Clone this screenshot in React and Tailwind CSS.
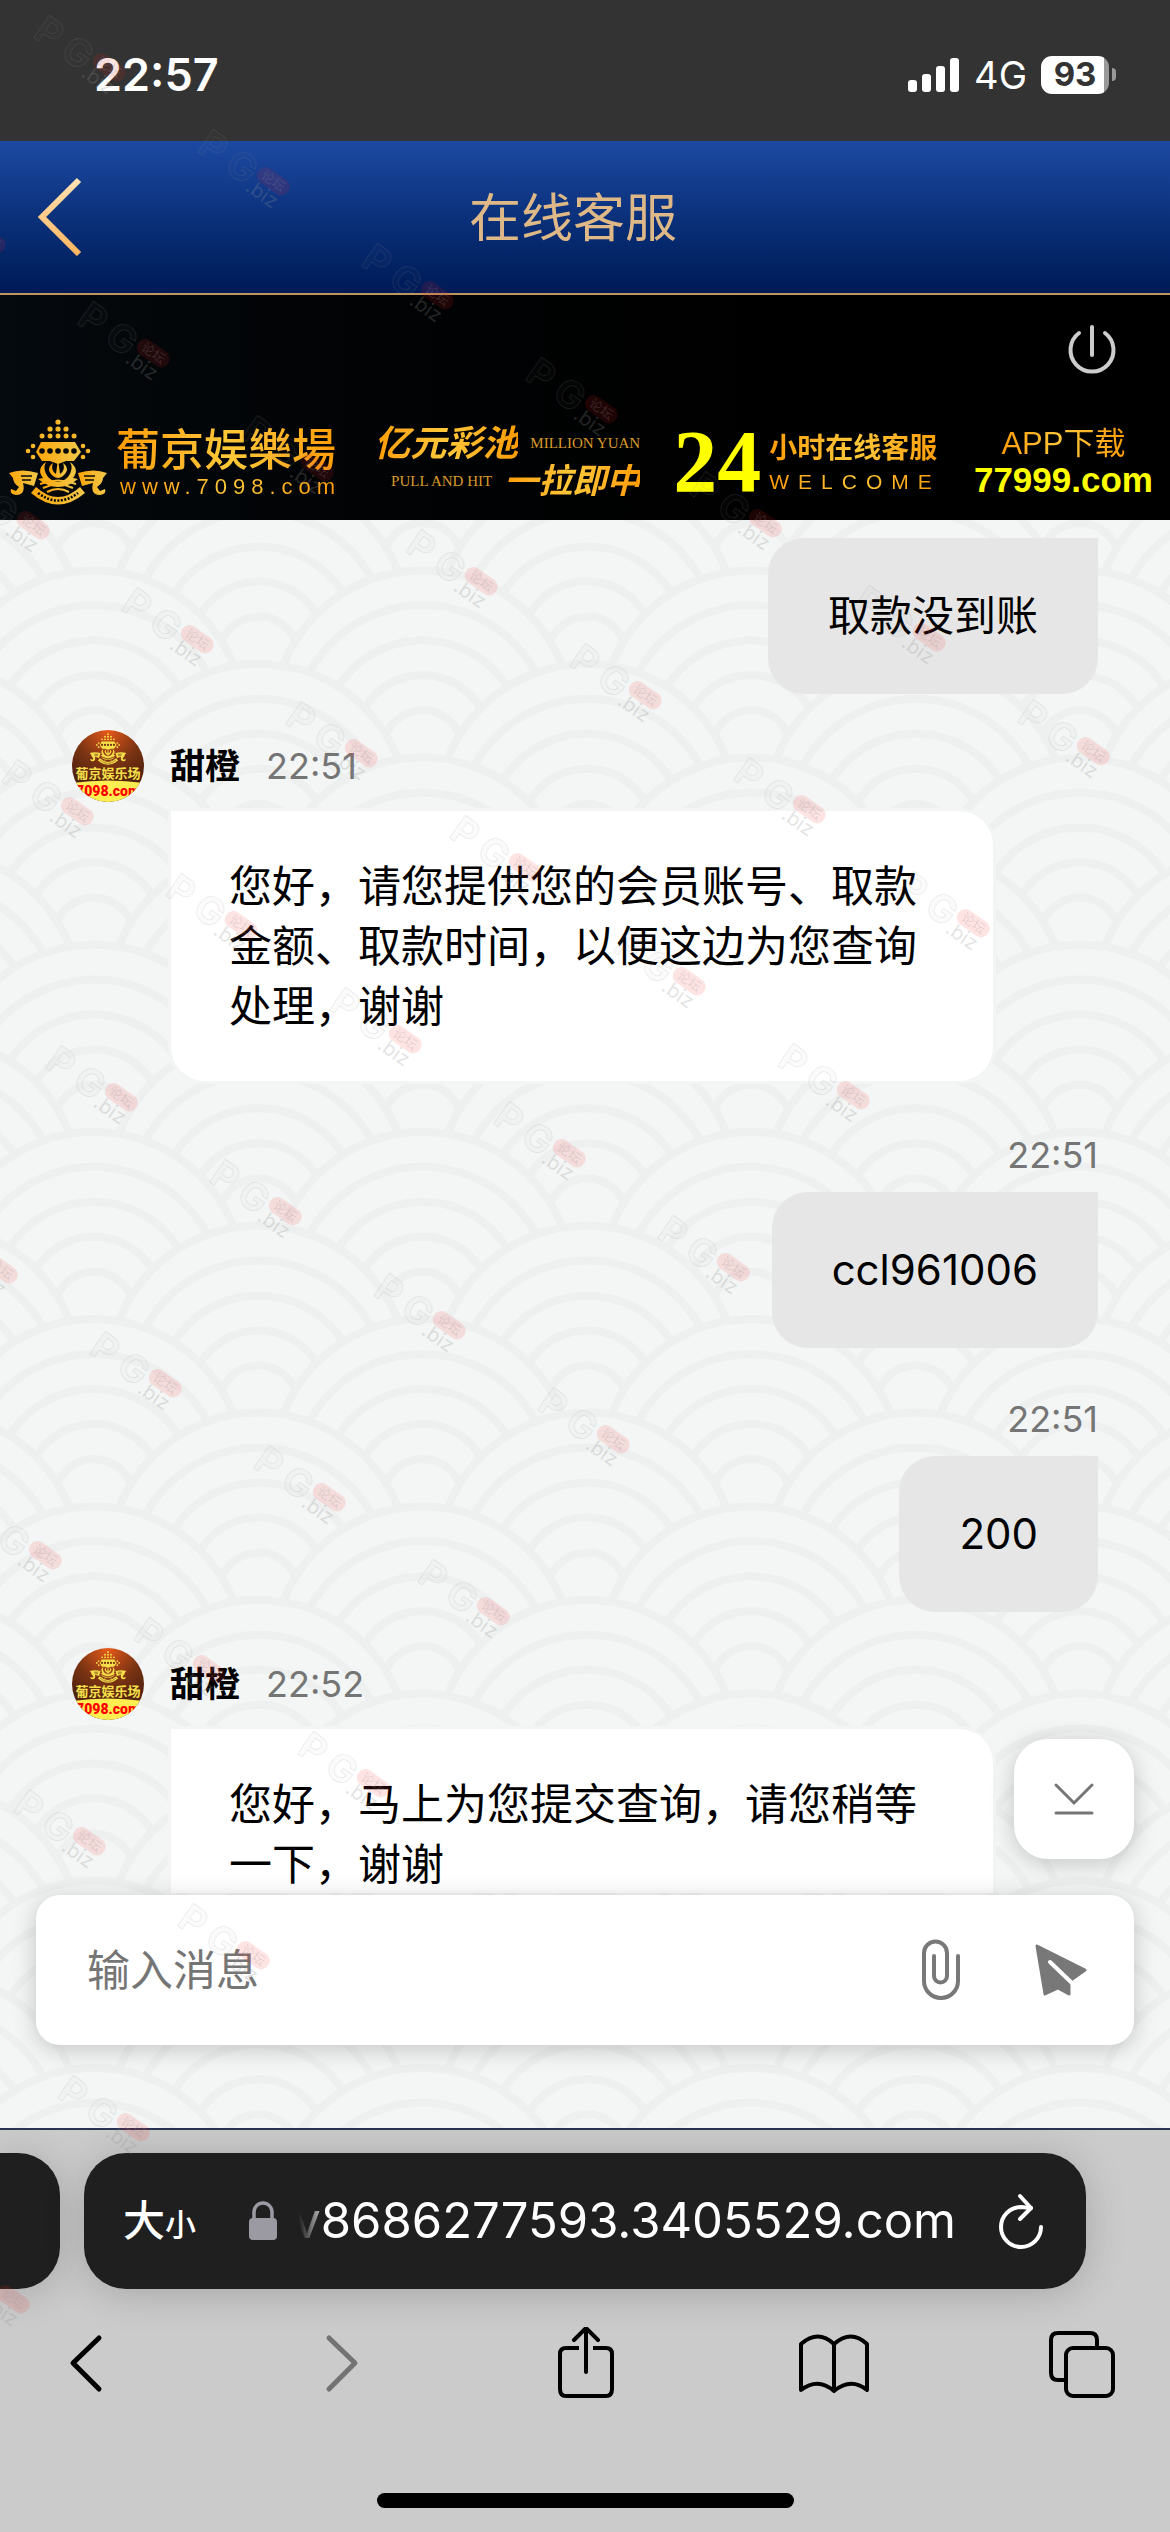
const GOLD_TEXT = "bg-linear-to-r from-[#ff9c00] via-[#ffc838] to-[#ff9c00] bg-clip-text text-transparent"

const messages = [
  { id: 1, from: "me", text: "取款没到账" },
  { id: 2, from: "agent", name: "甜橙", time: "22:51", text: "您好，请您提供您的会员账号、取款金额、取款时间，以便这边为您查询处理，谢谢" },
  { id: 3, from: "me", time: "22:51", text: "ccl961006" },
  { id: 4, from: "me", time: "22:51", text: "200" },
  { id: 5, from: "agent", name: "甜橙", time: "22:52", text: "您好，马上为您提交查询，请您稍等一下，谢谢" },
]

function StatusBar() {
  return (
    <div className="flex h-[141px] shrink-0 items-center justify-between bg-[#333] pl-[94px] pr-[54px] pt-[8px] text-white">
      <span className="text-[45px] font-semibold leading-none">22:57</span>
      <div className="flex items-center gap-[14px]">
        <svg className="h-[34px] w-[52px]" viewBox="0 0 52 34" fill="currentColor">
          <rect x="0" y="22" width="9" height="12" rx="3" />
          <rect x="14" y="16" width="9" height="18" rx="3" />
          <rect x="28" y="8" width="9" height="26" rx="3" />
          <rect x="42" y="0" width="9" height="34" rx="3" />
        </svg>
        <span className="text-[38px] leading-none">4G</span>
        <div className="flex items-center gap-[3px]">
          <span className="flex h-[38px] w-[68px] items-center justify-center rounded-[11px] bg-linear-to-r from-white from-93% to-[#999] to-93% text-[33px] font-bold leading-none text-[#333]">
            93
          </span>
          <span className="h-[13px] w-[4px] rounded-r-full bg-[#999]" />
        </div>
      </div>
    </div>
  )
}

function Header() {
  return (
    <header className="flex h-[154px] shrink-0 items-center border-b-2 border-[#c09560] bg-linear-to-b from-[#1c49a2] to-[#001a56] pl-[36px] pr-[108px]">
      <button type="button" aria-label="返回" className="h-[80px] w-[48px]">
        <svg viewBox="0 0 48 80" fill="none">
          <defs>
            <linearGradient id="back" x1="0" y1="0" x2="0" y2="1">
              <stop offset="0" stopColor="#ffe2b0" />
              <stop offset="1" stopColor="#ffb561" />
            </linearGradient>
          </defs>
          <path d="M43 3 L6 40 L43 77" stroke="url(#back)" strokeWidth="6" />
        </svg>
      </button>
      <h1 className="flex-1 pt-1 text-center text-[52px] leading-none text-[#deb887]">在线客服</h1>
    </header>
  )
}

function Emblem({ className, main, dark }) {
  return (
    <svg className={className} viewBox="0 0 100 86" fill={main}>
      <circle cx="50" cy="3" r="2.6" />
      {[42, 50, 58].map((x) => <circle key={x} cx={x} cy="10" r="2.6" />)}
      {[34, 42, 50, 58, 66].map((x) => <circle key={x} cx={x} cy="17" r="2.5" />)}
      <path d="M33 23 H67 L73 33 L66 42 H58 L50 45 L42 42 H34 L28 33 Z" />
      {[34, 42, 50, 58, 66].map((x) => <circle key={x} cx={x} cy="32" r="2.8" fill={dark} />)}
      <circle cx="25" cy="27" r="2.3" /><circle cx="20" cy="32" r="2.3" /><circle cx="25" cy="38" r="2.3" />
      <circle cx="75" cy="27" r="2.3" /><circle cx="80" cy="32" r="2.3" /><circle cx="75" cy="38" r="2.3" />
      <path d="M45 44 Q37 50 45 57 Q50 61 55 57 Q63 50 55 44 Q58 51 52 55 L50 40 L48 55 Q42 51 45 44 Z" />
      <path d="M38 43 Q34 50 40 58 Q50 68 60 58 Q66 50 62 43 Q72 50 65 59 L70 60 Q50 76 30 60 L35 59 Q28 50 38 43 Z" />
      <path d="M32 65 Q50 58 68 65 M35 69 Q50 62 65 69 M39 73 Q50 67 61 73" fill="none" stroke={main} strokeWidth="2" />
      <path d="M28 68 Q50 88 72 68 L77 74 Q50 97 23 74 Z" />
      <path d="M30 74 Q50 89 70 74" fill="none" stroke={dark} strokeWidth="2.5" strokeDasharray="2 1.5" />
      <path d="M1 54 Q14 49 30 54 L26 67 L15 64 Q18 76 8 76 Q1 75 3 70 L8 72 L11 68 Q5 64 5 59 Z" />
      <path d="M99 54 Q86 49 70 54 L74 67 L85 64 Q82 76 92 76 Q99 75 97 70 L92 72 L89 68 Q95 64 95 59 Z" />
      <path d="M13 57 H24 M14 61 H23 M76 57 H87 M77 61 H86" stroke={dark} strokeWidth="1.6" />
    </svg>
  )
}

function Banner() {
  return (
    <section className="flex h-[225px] shrink-0 flex-col justify-between bg-linear-to-r from-[#050a0e] to-black pb-[14px] pt-[22px]">
      <button type="button" aria-label="结束对话" className="mr-[50px] h-[60px] w-[56px] self-end">
        <svg viewBox="0 0 56 60" fill="none" stroke="#cdcdcd" strokeWidth="4" strokeLinecap="round">
          <path d="M28 10 V38" />
          <path d="M15 16 A21.5 21.5 0 1 0 41 16" />
        </svg>
      </button>
      <div className="flex h-[88px] items-center justify-between pl-2 pr-[17px]">
        <div className="flex items-center gap-2">
          <svg className="absolute h-0 w-0">
            <defs>
              <linearGradient id="gold" x1="0" y1="0" x2="1" y2="0">
                <stop offset="0" stopColor="#ffa50a" />
                <stop offset="1" stopColor="#f0c84a" />
              </linearGradient>
            </defs>
          </svg>
          <Emblem className="h-[86px] w-[100px]" main="url(#gold)" dark="#04080b" />
          <div className={`flex flex-col gap-[3px] ${GOLD_TEXT}`}>
            <span className="text-[44px] font-medium leading-[46px]">葡京娱樂場</span>
            <span className="pl-1 font-['Liberation_Sans',sans-serif] text-[22px] leading-[22px] tracking-[6px]">www.7098.com</span>
          </div>
        </div>
        <div className="flex flex-col">
          <div className="flex items-center gap-3">
            <span className={`text-[36px] font-bold italic leading-[38px] ${GOLD_TEXT}`}>亿元彩池</span>
            <span className="font-['Liberation_Serif',serif] text-[15px] text-[#d99a2b]">MILLION YUAN</span>
          </div>
          <div className="flex items-center justify-end gap-3">
            <span className="font-['Liberation_Serif',serif] text-[15px] text-[#d99a2b]">PULL AND HIT</span>
            <span className={`text-[34px] font-bold italic leading-[38px] ${GOLD_TEXT}`}>一拉即中</span>
          </div>
        </div>
        <div className="flex items-center gap-2">
          <span className="font-['Liberation_Serif',serif] text-[88px] font-bold leading-[88px] text-[#ff0]">24</span>
          <div className="flex flex-col gap-2">
            <span className={`text-[28px] font-bold leading-[30px] ${GOLD_TEXT}`}>小时在线客服</span>
            <span className={`font-['Liberation_Sans',sans-serif] text-[21px] leading-[21px] tracking-[9px] ${GOLD_TEXT}`}>WELCOME</span>
          </div>
        </div>
        <div className="flex flex-col items-center">
          <span className={`font-['Liberation_Sans','Noto_Sans_CJK_SC',sans-serif] text-[31px] leading-[36px] ${GOLD_TEXT}`}>APP下载</span>
          <span className="font-['Liberation_Sans',sans-serif] text-[35px] font-bold leading-[36px] text-[#ff0]">77999.com</span>
        </div>
      </div>
    </section>
  )
}

const WAVE_ARCS = [
  [150, 150],
  [164, 129],
  [170, 100],
  [173, 68],
  [180, 40],
]

// overlapping fish-scale arcs, painted row by row so lower rows cover upper ones
function Waves() {
  const scales = []
  for (let row = 0; row < 22; row++) {
    for (let col = 0; col < 5; col++) {
      const x = (row % 2 ? -70 : 94) + col * 328.6
      scales.push(<use key={`${row}-${col}`} href="#scale" x={x} y={-137 + row * 93.6} />)
    }
  }
  return (
    <svg className="absolute inset-0 h-full w-full" aria-hidden="true">
      <defs>
        <g id="scale" fill="#f3f6f5" stroke="#eef0f0" strokeWidth="8">
          {WAVE_ARCS.map(([cy, r]) => <circle key={r} cx="0" cy={cy} r={r} />)}
        </g>
      </defs>
      {scales}
    </svg>
  )
}

function Avatar() {
  return (
    <svg className="h-[72px] w-[72px] shrink-0 rounded-full" viewBox="0 0 72 72">
      <defs>
        <radialGradient id="face" cx="0.5" cy="0" r="0.75">
          <stop offset="0" stopColor="#e8591a" />
          <stop offset="0.6" stopColor="#7c3413" />
          <stop offset="1" stopColor="#54230f" />
        </radialGradient>
      </defs>
      <rect width="72" height="72" fill="url(#face)" />
      <path d="M0 53 Q36 48 72 53 V72 H0 Z" fill="#ffee4f" />
      <svg x="17" y="3" width="38" height="32">
        <Emblem main="#f6e04a" dark="#6a2c12" />
      </svg>
      <text x="36" y="48" textAnchor="middle" fontSize="13" fontWeight="bold" fill="#f6e04a">葡京娱乐场</text>
      <text x="36" y="66" textAnchor="middle" fontSize="14" fontWeight="900" fontFamily="Roboto" fill="#f00">7098.com</text>
    </svg>
  )
}

function Message({ msg }) {
  if (msg.from === "me") {
    return (
      <div className="flex flex-col items-end">
        {msg.time && <time className="mb-[15px] mt-[49px] text-[36px] leading-[44px] text-[#757575]">{msg.time}</time>}
        <p className="rounded-[36px] rounded-tr-none bg-[#e6e6e6] px-[60px] py-[48px] text-[42px] leading-[60px]">{msg.text}</p>
      </div>
    )
  }
  return (
    <div className="mt-9">
      <div className="flex items-center">
        <Avatar />
        <span className="ml-[26px] text-[35px] font-bold leading-[44px]">{msg.name}</span>
        <time className="ml-[26px] text-[36px] leading-[44px] text-[#757575]">{msg.time}</time>
      </div>
      <p className="mb-[3px] ml-[99px] mr-[105px] mt-[9px] rounded-[34px] rounded-tl-none bg-white px-[58px] py-[45px] text-[43px] leading-[60px] ring-3 ring-[#f3f5f5]">
        {msg.text}
      </p>
    </div>
  )
}

function Composer() {
  return (
    <form className="relative mx-9 mb-[83px] mt-[2px] flex h-[150px] shrink-0 items-center rounded-[24px] bg-white pl-[51px] pr-[37px] shadow-[0_4px_24px_rgba(0,0,0,0.2)]">
      <input
        type="text"
        aria-label="输入消息"
        placeholder="输入消息"
        className="h-full min-w-0 flex-1 bg-transparent text-[43px] outline-none placeholder:text-[#757575]"
      />
      <button type="button" aria-label="附件" className="h-[72px] w-[72px]">
        <svg viewBox="0 0 72 72" fill="none" stroke="#787878" strokeWidth="4" strokeLinecap="round">
          <path d="M53 22 V47 A17 17 0 0 1 19 47 V19 A11.5 11.5 0 0 1 42 19 V42 A6.5 6.5 0 0 1 29 42 V22" />
        </svg>
      </button>
      <button type="submit" aria-label="发送" className="ml-[48px] h-[72px] w-[72px]">
        <svg viewBox="0 0 72 72" fill="#787878" stroke="#787878" strokeWidth="3" strokeLinejoin="round">
          <path d="M12 12 L60 36 L46 46 L44 48 L44 60 L33 54 L20 60 Z" />
          <path d="M25 28 L48 50" stroke="#fff" strokeWidth="4" strokeLinecap="round" />
        </svg>
      </button>
    </form>
  )
}

function Chat() {
  return (
    <main className="relative flex min-h-0 flex-1 flex-col overflow-hidden bg-[#f3f6f5]">
      <Waves />
      <div className="relative min-h-0 flex-1">
        <div className="h-full overflow-hidden px-[72px] pt-[18px] text-black">
          {messages.map((m) => (
            <Message key={m.id} msg={m} />
          ))}
        </div>
        <button
          type="button"
          aria-label="滚动到底部"
          className="absolute bottom-[34px] right-9 h-[120px] w-[120px] rounded-[34px] bg-white shadow-[0_4px_24px_rgba(0,0,0,0.2)]"
        >
          <svg viewBox="0 0 120 120" fill="none" stroke="#757575" strokeWidth="3" strokeLinecap="round">
            <path d="M42 46 L60 64 L78 46 M42 74 H78" />
          </svg>
        </button>
      </div>
      <Composer />
    </main>
  )
}

function BrowserBar() {
  return (
    <footer className="shrink-0 border-t-2 border-[#2c3454] bg-[#cbcbcb] pb-6 pt-[23px] text-black">
      <div className="flex h-[136px] gap-6">
        <div className="w-[60px] rounded-r-[42px] bg-[#1f1f1f] shadow-[0_4px_40px_rgba(0,0,0,0.18)]" />
        <div className="mr-[84px] flex flex-1 items-center rounded-[42px] bg-[#1f1f1f] pl-[39px] pr-[38px] text-white shadow-[0_4px_40px_rgba(0,0,0,0.18)]">
          <button type="button" aria-label="页面设置" className="flex items-baseline font-medium leading-none">
            <span className="text-[42px]">大</span>
            <span className="text-[31px]">小</span>
          </button>
          <div className="ml-auto mr-[38px] flex items-center">
            <svg className="mr-6 h-[40px] w-[28px]" viewBox="0 0 28 40">
              <rect x="0" y="17" width="28" height="22" rx="4" fill="#9b9aa2" />
              <path d="M5 18 V11 A9 9 0 0 1 23 11 V18" fill="none" stroke="#9b9aa2" strokeWidth="3.5" />
            </svg>
            <div className="flex text-[49px] leading-[60px]">
              <span className="-ml-2 bg-linear-to-r from-[#1f1f1f] from-20% to-[#bbb] bg-clip-text text-transparent">v</span>
              <span>8686277593.3405529.com</span>
            </div>
          </div>
          <button type="button" aria-label="刷新" className="h-[60px] w-[54px]">
            <svg viewBox="0 0 54 60" fill="none" stroke="currentColor" strokeWidth="4" strokeLinecap="round" strokeLinejoin="round">
              <path d="M37 17 L27 16 A20 20 0 1 0 47 36" />
              <path d="M26 5 L37 17 L26 28" />
            </svg>
          </button>
        </div>
      </div>
      <nav className="mt-[38px] flex justify-between px-[49px]">
        <button type="button" aria-label="后退" className="h-[72px] w-[72px]">
          <svg viewBox="0 0 72 72" fill="none" stroke="currentColor" strokeWidth="5" strokeLinecap="round" strokeLinejoin="round">
            <path d="M50 11 L24 36 L50 62" />
          </svg>
        </button>
        <button type="button" aria-label="前进" className="h-[72px] w-[72px] text-[#737373]">
          <svg viewBox="0 0 72 72" fill="none" stroke="currentColor" strokeWidth="5" strokeLinecap="round" strokeLinejoin="round">
            <path d="M30 11 L56 36 L30 62" />
          </svg>
        </button>
        <button type="button" aria-label="分享" className="h-[72px] w-[72px]">
          <svg viewBox="0 0 72 72" fill="none" stroke="currentColor" strokeWidth="4" strokeLinecap="round" strokeLinejoin="round">
            <path d="M30 21 H17 Q11 21 11 27 V62 Q11 69 17 69 H57 Q63 69 63 62 V27 Q63 21 57 21 H44" strokeLinecap="butt" />
            <path d="M37 45 V2 M25 13 L37 1 L49 13" />
          </svg>
        </button>
        <button type="button" aria-label="书签" className="h-[72px] w-[72px]">
          <svg viewBox="0 0 72 72" fill="none" stroke="currentColor" strokeWidth="4" strokeLinecap="round" strokeLinejoin="round">
            <path d="M35 17 Q19 2 2 17 V63 Q19 50 35 64 Q52 50 68 63 V17 Q52 2 35 17 V64" />
          </svg>
        </button>
        <button type="button" aria-label="标签页" className="h-[72px] w-[72px]">
          <svg viewBox="0 0 72 72" fill="none" stroke="currentColor" strokeWidth="4">
            <rect x="17" y="21" width="47" height="48" rx="7" />
            <path d="M17 53 H9 Q2 53 2 46 V13 Q2 6 9 6 H41 Q48 6 48 13 V21" />
          </svg>
        </button>
      </nav>
      <div className="mx-auto mt-[94px] h-[15px] w-[417px] rounded-full bg-black" />
    </footer>
  )
}

function Watermarks() {
  const marks = []
  for (let j = 0; j < 10; j++) {
    for (let i = 0; i < 7; i++) {
      const x = 49 + i * 164 - j * 120
      const y = 33 + i * 114 + j * 172
      if (x > -100) marks.push(<use key={`${i}-${j}`} href="#mark" x={x} y={y} />)
    }
  }
  return (
    <svg className="pointer-events-none absolute inset-0 h-full w-full" aria-hidden="true">
      <defs>
        <g id="mark">
          <g transform="rotate(35)">
            <g fill="#909090" fillOpacity="0.05" stroke="#909090" strokeOpacity="0.16" fontWeight="bold">
              <text x="0" y="13" textAnchor="middle" fontSize="38">P</text>
              <text x="35" y="13" textAnchor="middle" fontSize="38">G</text>
            </g>
            <rect x="51" y="-15" width="36" height="17" rx="8" fill="#ff2020" fillOpacity="0.12" />
            <text x="69" y="-2" textAnchor="middle" fontSize="13" fill="#909090" fillOpacity="0.25">论坛</text>
            <text x="67" y="17" textAnchor="middle" fontSize="20" fill="#909090" fillOpacity="0.25">.biz</text>
          </g>
        </g>
      </defs>
      {marks}
    </svg>
  )
}

export default function App() {
  return (
    <div className="relative flex h-screen flex-col overflow-hidden font-['Inter','Noto_Sans_CJK_SC',sans-serif]">
      <StatusBar />
      <Header />
      <Banner />
      <Chat />
      <BrowserBar />
      <Watermarks />
    </div>
  )
}
